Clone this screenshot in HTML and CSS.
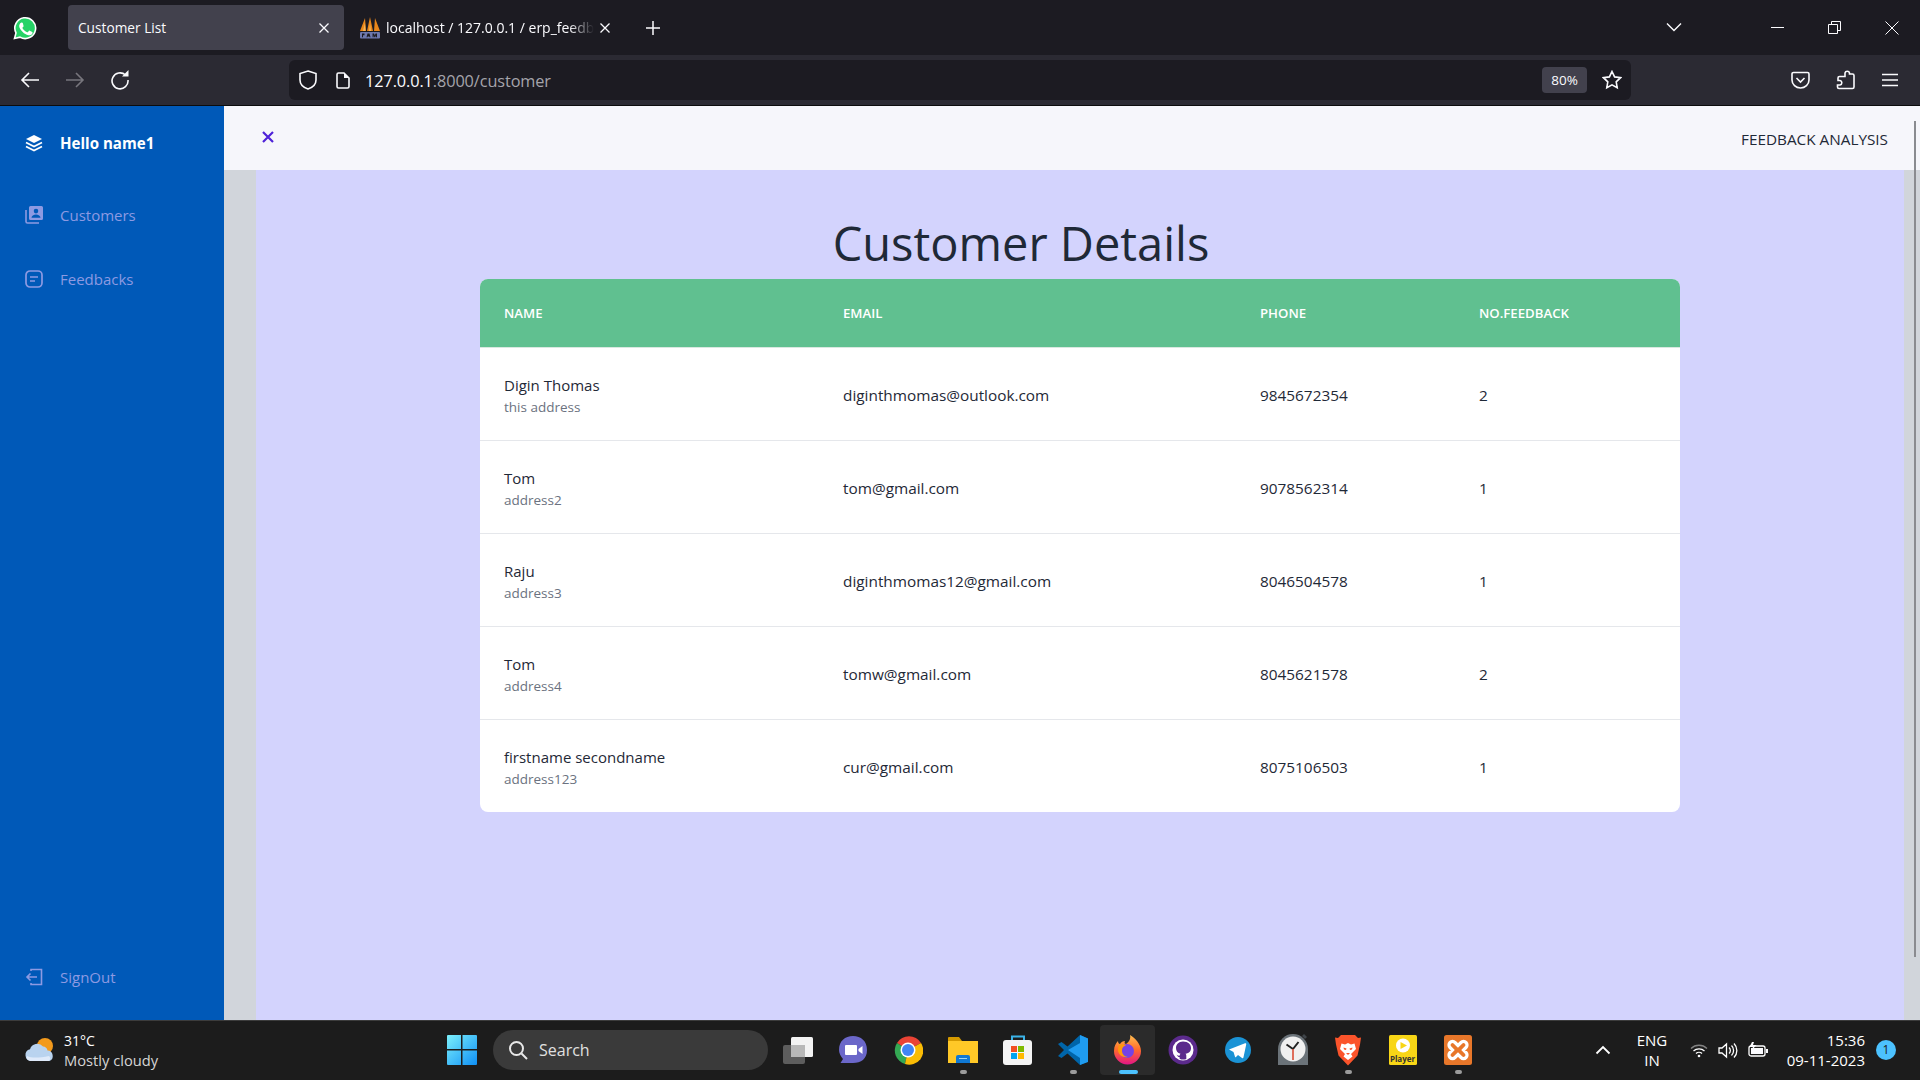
FILE: index.html
```html
<!DOCTYPE html>
<html lang="en">
<head>
<meta charset="utf-8">
<title>Customer List</title>
<link rel="stylesheet" href="styles.css">
</head>
<body>
<div class="tabbar">
  <svg class="wa" width="24" height="24" viewBox="0 0 24 24"><path fill="#25d366" stroke="#fff" stroke-width="1.6" d="M1.5 22.5l1.5-5.6A10.4 10.4 0 1 1 7 21.100z"/><path fill="#fff" d="M8.700 6.500c-.4 0-1 .2-1.400.7-.5.6-1.100 1.500-1.100 2.800 0 1.600 1.200 3.300 1.400 3.500.2.300 2.300 3.600 5.600 4.900 2.700 1 3.300.8 3.900.8.600-.1 1.900-.8 2.200-1.500.3-.8.300-1.400.2-1.500-.1-.2-.3-.2-.7-.4l-2.200-1.100c-.3-.1-.5-.2-.8.200l-1 1.300c-.2.200-.4.200-.7.100-.4-.2-1.400-.5-2.700-1.700-1-.9-1.700-2-1.900-2.300-.2-.4 0-.6.100-.7l.9-1.200c.1-.2.100-.4 0-.6L9.900 7.300c-.3-.7-.6-.8-1.200-.8z"/></svg>
  <div class="tab active"><span class="tab-title">Customer List</span><svg class="tab-x" viewBox="0 0 12 12"><path d="M1.500 1.500l9 9m0-9l-9 9"/></svg></div>
  <div class="tab second">
    <svg class="pma" width="22" height="22" viewBox="0 0 22 22"><path fill="#e8861a" d="M1 14L6 1l1 13zM8 14l3-14 3 14zM15 14l1-13 5 13z"/><path fill="#f5b759" d="M4 14l2-8 .5 8zM10 14l1-8 1 8z"/><rect x="1" y="15" width="20" height="6.500" rx="1" fill="#6c78af"/><path fill="#1c1b22" d="M3 16.500h2.500v1.700H4v2H3zM8.500 16.500h2l1 3.700h-1l-.2-.8H8.700l-.2.800h-1zM13.500 16.500h1.500l.8 2 .8-2H18v3.700h-1v-2l-.8 2h-.8l-.8-2v2h-1z"/></svg>
    <span class="tab-title fade">localhost / 127.0.0.1 / erp_feedb</span>
    <svg class="tab-x" viewBox="0 0 12 12"><path d="M1.500 1.500l9 9m0-9l-9 9"/></svg>
  </div>
  <svg class="plus" width="16" height="16" viewBox="0 0 16 16"><path d="M8 1v14M1 8h14"/></svg>
  <div class="grow"></div>
  <svg class="chev" width="16" height="10" viewBox="0 0 16 10"><path d="M1 1.500l7 7 7-7"/></svg>
  <div class="winbtns">
    <svg width="13" height="13" viewBox="0 0 13 13"><path d="M0 6.500h13"/></svg>
    <svg width="13" height="13" viewBox="0 0 13 13"><path d="M.5 3.500h9v9h-9zM3.500 3V.5h9v9H10"/></svg>
    <svg width="14" height="14" viewBox="0 0 14 14"><path d="M.5.5l13 13m0-13l-13 13"/></svg>
  </div>
</div>
<div class="toolbar">
  <svg class="nav back" width="20" height="18" viewBox="0 0 20 18"><path d="M19 9H2M9 2L2 9l7 7"/></svg>
  <svg class="nav fwd" width="20" height="18" viewBox="0 0 20 18"><path d="M1 9h17M11 2l7 7-7 7"/></svg>
  <svg class="nav reload" width="20" height="20" viewBox="0 0 20 20"><path d="M15.500 5A8 8 0 1 0 18 10"/><path class="solid" d="M12 6.500h6.500V0z"/></svg>
  <div class="urlbar">
    <svg class="nav" width="18" height="20" viewBox="0 0 18 20"><path d="M9 1l8 2.500V10c0 4.500-3.500 7.500-8 9-4.500-1.500-8-4.500-8-9V3.500z"/></svg>
    <svg class="nav page-ic" width="14" height="17" viewBox="0 0 14 17"><path d="M1 2.500A1.500 1.500 0 0 1 2.500 1H8l5 5v8.500a1.500 1.500 0 0 1-1.500 1.500h-9A1.500 1.500 0 0 1 1 14.500z"/><path class="solid" d="M8 1l5 5H8z"/></svg>
    <span class="url"><b>127.0.0.1</b>:8000/customer</span>
    <span class="zoomlvl">80%</span>
    <svg class="nav star" width="20" height="20" viewBox="0 0 20 20"><path d="M10 1.500l2.600 5.400 5.900.8-4.300 4.100 1 5.900-5.200-2.800-5.200 2.800 1-5.900L1.500 7.700l5.900-.8z"/></svg>
  </div>
  <svg class="nav pocket" width="19" height="18" viewBox="0 0 19 18"><path d="M2.500 1.500h14A1.500 1.500 0 0 1 18 3v6a8.500 8 0 0 1-17 0V3a1.500 1.500 0 0 1 1.500-1.500z"/><path d="M5.500 7l4 4 4-4"/></svg>
  <svg class="nav ext" width="19" height="20" viewBox="0 0 19 20"><path d="M9 4V3a2.300 2.300 0 0 1 4.500 0v1h3a1.500 1.500 0 0 1 1.500 1.500V17a1.500 1.500 0 0 1-1.500 1.500H3A1.500 1.500 0 0 1 1.500 17v-2H4a2.300 2.300 0 0 0 0-4.500H2V8a1.500 1.500 0 0 1 1.500-1.500H9z"/></svg>
  <svg class="nav menu" width="16" height="14" viewBox="0 0 16 14"><path d="M0 1.500h16M0 7h16M0 12.500h16"/></svg>
</div>
<div class="page">
  <aside class="sidebar">
    <div class="side-item brand">
      <svg class="side-ic" width="18" height="18" viewBox="0 0 18 18"><path d="M9 1l8 4-8 4-8-4z" fill="#fff"/><path d="M1 8.500l8 4 8-4M1 12.500l8 4 8-4" fill="none" stroke="#fff" stroke-width="1.800"/></svg>
      <span>Hello name1</span>
    </div>
    <div class="side-item link first">
      <svg class="side-ic" width="18" height="18" viewBox="0 0 18 18"><path fill="none" stroke="currentColor" stroke-width="1.600" d="M1 4v11.500A1.500 1.500 0 0 0 2.500 17H14"/><path fill="currentColor" fill-rule="evenodd" d="M5.500 0h11A1.500 1.500 0 0 1 18 1.500v11a1.500 1.500 0 0 1-1.500 1.500h-11A1.500 1.500 0 0 1 4 12.500v-11A1.500 1.500 0 0 1 5.500 0zM11 2.800a2.300 2.300 0 1 0 0 4.600 2.300 2.300 0 0 0 0-4.600zM6.500 11.800h9c0-2-2.200-3.300-4.500-3.300s-4.500 1.300-4.500 3.300z"/></svg>
      <span>Customers</span>
    </div>
    <div class="side-item link">
      <svg class="side-ic" width="18" height="18" viewBox="0 0 18 18"><rect x="1" y="1" width="16" height="16" rx="4" fill="none" stroke="currentColor" stroke-width="1.700"/><path stroke="currentColor" stroke-width="1.700" d="M5 7h8M5 11h5"/></svg>
      <span>Feedbacks</span>
    </div>
    <div class="grow"></div>
    <div class="side-item link signout">
      <svg class="side-ic" width="18" height="18" viewBox="0 0 18 18"><path fill="none" stroke="currentColor" stroke-width="1.600" d="M6 3V1.500h10.500v15H6V15M12 9H2M5.500 5.500L2 9l3.500 3.500"/></svg>
      <span>SignOut</span>
    </div>
  </aside>
  <main class="main">
    <header class="topbar">
      <svg class="close" width="12" height="12" viewBox="0 0 12 12"><path d="M1 1l10 10m0-10L1 11"/></svg>
      <span class="analysis">FEEDBACK ANALYSIS</span>
    </header>
    <div class="body-area">
      <div class="gutter"></div>
      <div class="content">
        <div class="wrap">
          <h1>Customer Details</h1>
          <table>
            <thead>
              <tr><th class="c1">NAME</th><th class="c2">EMAIL</th><th class="c3">PHONE</th><th class="c4">NO.FEEDBACK</th></tr>
            </thead>
            <tbody>
              <tr><td><div class="nm">Digin Thomas</div><div class="ad">this address</div></td><td>diginthmomas@outlook.com</td><td>9845672354</td><td>2</td></tr>
              <tr><td><div class="nm">Tom</div><div class="ad">address2</div></td><td>tom@gmail.com</td><td>9078562314</td><td>1</td></tr>
              <tr><td><div class="nm">Raju</div><div class="ad">address3</div></td><td>diginthmomas12@gmail.com</td><td>8046504578</td><td>1</td></tr>
              <tr><td><div class="nm">Tom</div><div class="ad">address4</div></td><td>tomw@gmail.com</td><td>8045621578</td><td>2</td></tr>
              <tr><td><div class="nm">firstname secondname</div><div class="ad">address123</div></td><td>cur@gmail.com</td><td>8075106503</td><td>1</td></tr>
            </tbody>
          </table>
        </div>
      </div>
      <div class="scroll"><div class="thumb"></div></div>
    </div>
  </main>
</div>
<footer class="taskbar">
  <div class="weather">
    <svg width="32" height="26" viewBox="0 0 32 26"><circle cx="21" cy="9" r="8" fill="#f39a1c"/><path fill="#b9d3ef" d="M7 24a6 6 0 0 1-1-11.800A7.500 7.500 0 0 1 19 9.500a5 5 0 0 1 4.500 4 5.500 5.500 0 0 1 2 10.500z"/><path fill="#dfeafa" d="M6 24c-3-1-4-3-3-5 4 2 12 2 22 0 2 2 1 4 0 5z"/></svg>
    <div class="w-text"><div class="w-t">31°C</div><div class="w-d">Mostly cloudy</div></div>
  </div>
  <svg class="winlogo" width="30" height="30" viewBox="0 0 30 30"><defs><linearGradient id="wg" x1="0" y1="0" x2="1" y2="1"><stop offset="0" stop-color="#7cf0fb"/><stop offset="1" stop-color="#0f8ff5"/></linearGradient></defs><path fill="url(#wg)" d="M0 1a1 1 0 0 1 1-1h13v14H0zM15.500 0H29a1 1 0 0 1 1 1v13H15.500zM0 15.500h14V30H1a1 1 0 0 1-1-1zM15.500 15.500H30V29a1 1 0 0 1-1 1H15.500z"/></svg>
  <div class="search">
    <svg width="20" height="20" viewBox="0 0 20 20"><circle cx="8.500" cy="8.500" r="6.500"/><path d="M13.500 13.500L19 19"/></svg>
    <span>Search</span>
  </div>
  <div class="apps">
    <div class="app"><svg width="32" height="28" viewBox="0 0 32 28"><rect x="1" y="9" width="22" height="19" rx="2" fill="#5d5d5d"/><rect x="9" y="1" width="22" height="20" rx="1.500" fill="#f3f3f3"/><rect x="9" y="9" width="14" height="12" fill="#b8b8b8"/></svg></div>
    <div class="app"><svg width="30" height="30" viewBox="0 0 30 30"><path fill="#6b67c9" d="M15 1C23 1 29 6 29 15s-6 13-14 13H2.500l2.500-4C2.500 21 1 18 1 15 1 6 7 1 15 1z"/><path fill="#fff" d="M8 10h10a1 1 0 0 1 1 1v8a1 1 0 0 1-1 1H8a1 1 0 0 1-1-1v-8a1 1 0 0 1 1-1zM20.500 14l4-3v8l-4-3z"/></svg></div>
    <div class="app"><svg width="30" height="30" viewBox="0 0 30 30"><path fill="#ea4335" d="M15 15L4 8a14 14 0 0 1 24 0z"/><path fill="#34a853" d="M15 15L4 8a14 14 0 0 0 8 21z"/><path fill="#fbbc05" d="M15 15l13-7a14 14 0 0 1-16 21z"/><circle cx="15" cy="15" r="7.500" fill="#fff"/><circle cx="15" cy="15" r="6" fill="#4285f4"/></svg></div>
    <div class="app dot"><svg width="30" height="28" viewBox="0 0 30 28"><path fill="#d59a00" d="M0 2a1 1 0 0 1 1-1h10l3 4H0z"/><rect y="5" width="30" height="22" fill="#ffc827"/><path fill="#0f78d4" d="M8 21a2 2 0 0 1 2-2h10a2 2 0 0 1 2 2v6H8z"/><path fill="#9ad4f5" d="M11 22h8v1h-8z"/></svg></div>
    <div class="app"><svg width="30" height="32" viewBox="0 0 30 32"><path fill="none" stroke="#3bb3e8" stroke-width="2" d="M9 7V2.500h12V7"/><rect y="6" width="29" height="25" rx="3" fill="#f4f4f4"/><rect x="8" y="12" width="6" height="6" fill="#f25022"/><rect x="15" y="12" width="6" height="6" fill="#7fba00"/><rect x="8" y="19" width="6" height="6" fill="#00a4ef"/><rect x="15" y="19" width="6" height="6" fill="#ffb900"/></svg></div>
    <div class="app dot"><svg width="30" height="30" viewBox="0 0 30 30"><path fill="#0065a9" d="M22 0l8 3.500v23L22 30 9.500 18.500 3.500 23 0 21l6-6-6-6 3.500-2 6 4.500z"/><path fill="#1f9cf0" d="M22 0l8 3.500V27L22 30V8l-12 7 12 8z"/></svg></div>
    <div class="app active"><svg width="30" height="30" viewBox="0 0 30 30"><defs><linearGradient id="ff" x1="0" y1="0" x2="0" y2="1"><stop offset="0" stop-color="#ffbd4f"/><stop offset=".5" stop-color="#ff6b2b"/><stop offset="1" stop-color="#e31587"/></linearGradient></defs><path fill="url(#ff)" d="M17 0c5 3 11 9 11 16a13.500 13.500 0 0 1-27 0C1 11 3 8 5 6c0 2 1 3 2 3 1-2 3-3 5-3-1 2 0 3 1 3 3-2 5-5 4-9z"/><circle cx="14" cy="16" r="7" fill="#7542e5"/><path fill="#ff980e" d="M6 10c2-1 5-1 7 1-3 0-4 2-4 5s3 6 6 6c-5 1-9-2-10-6 0-2 0-4 1-6z"/></svg></div>
    <div class="app"><svg width="30" height="30" viewBox="0 0 30 30"><circle cx="15" cy="15" r="14.500" fill="#5b2a8c"/><circle cx="15" cy="15" r="10.500" fill="#fff"/><path fill="#5b2a8c" d="M15 6.500c-4.500 0-7 3-7 6.500 0 3 1.500 5 4.500 5.800-.5.500-.7 1-.8 1.800-1 .4-2.200.2-3-1 .3 1.500 1.300 2.600 3 2.600V24c0 .3 1 .500 3.300.500s3.300-.2 3.300-.5v-3.500c0-.8-.3-1.300-.8-1.700C21.500 18 23 16 23 13c0-3.500-2.500-6.500-8-6.500z"/></svg></div>
    <div class="app"><svg width="28" height="28" viewBox="0 0 28 28"><circle cx="14" cy="14" r="13" fill="#1b93d5"/><path fill="#fff" d="M5 13.500l16-6.200c.8-.3 1.400.2 1.200 1.200l-2.700 12.800c-.2.900-.8 1.100-1.500.700L14 19l-2 2c-.5.500-.8.400-1-.2L9.500 16z"/></svg></div>
    <div class="app"><svg width="30" height="32" viewBox="0 0 30 32"><path fill="#3f4449" d="M24 2l2-2 3 3-2 2z"/><path fill="#6b7379" d="M0 31V15a15 15 0 0 1 30 0v16z"/><circle cx="15" cy="15" r="12.500" fill="#f0f0f0"/><path stroke="#222" stroke-width="2" d="M15 15L8.500 10.500M15 15l5.500-7" fill="none"/><path stroke="#d8432b" stroke-width="1.500" d="M15 15v11"/></svg></div>
    <div class="app dot"><svg width="26" height="32" viewBox="0 0 26 32"><path fill="#fb542b" d="M6 1h14l3 3 3-.5-1 7-2.500 11L13 31.500 3.500 21.500 1 10.500l-1-7 3 .5z"/><path fill="#fff" d="M13 26l-4.500-3.500L10 20l-5-5 1.500-5.500L10 10.500 13 9l3 1.500 3.500-1L21 15l-5 5 1.500 2.500z"/><path fill="#fb542b" d="M8.500 13.500l3 1-.5 1.500-2-.5zM17.500 13.500l-3 1 .5 1.500 2-.5zM11 19h4l-2 2z"/></svg></div>
    <div class="app"><svg width="28" height="30" viewBox="0 0 28 30"><rect width="28" height="30" rx="1.500" fill="#f8d616"/><circle cx="14" cy="10.500" r="7" fill="#fff"/><path fill="#f8d616" d="M11.500 7l6.500 3.500L11.500 14z"/></svg><span class="pl">Player</span></div>
    <div class="app dot"><svg width="28" height="30" viewBox="0 0 28 30"><rect width="28" height="30" rx="2.500" fill="#e8772a"/><path fill="none" stroke="#fff" stroke-width="3.200" d="M14 10.500L11 7.500a3.500 3.500 0 1 0-5 5l2.500 2.500L6 17.500a3.500 3.500 0 1 0 5 5l3-3 3 3a3.500 3.500 0 1 0 5-5L19.500 15l2.500-2.500a3.500 3.500 0 1 0-5-5z"/></svg></div>
  </div>
  <div class="grow"></div>
  <div class="tray">
    <svg class="t-chev" width="16" height="10" viewBox="0 0 16 10"><path d="M1.500 8.500L8 2l6.500 6.500"/></svg>
    <div class="lang"><div>ENG</div><div>IN</div></div>
    <svg class="t-ic" width="18" height="15" viewBox="0 0 18 15"><path d="M1 5.500a11.500 11.500 0 0 1 16 0" opacity=".45"/><path d="M3.500 8a8 8 0 0 1 11 0M6 10.500a4.300 4.300 0 0 1 6 0"/><circle class="solid" cx="9" cy="13" r="1.300"/></svg>
    <svg class="t-ic" width="20" height="17" viewBox="0 0 20 17"><path d="M1 6h3l4.500-4v13L4 11H1zM11 5.500a4 4 0 0 1 0 6M13.500 3.500a7 7 0 0 1 0 10M16 1.500a10 10 0 0 1 0 14"/></svg>
    <svg class="t-ic" width="20" height="16" viewBox="0 0 20 16"><rect x="1" y="4" width="16" height="10" rx="2"/><rect class="solid" x="3" y="6" width="12" height="6"/><path class="solid" d="M18 7h2v4h-2zM4 0L1.500 5H5L3 9l5.500-6H5l1-3z"/></svg>
    <div class="clock"><div>15:36</div><div>09-11-2023</div></div>
    <div class="badge">1</div>
  </div>
</footer>
</body>
</html>
```
FILE: styles.css
```css
* { box-sizing: border-box; }
html, body { margin: 0; height: 100%; }
body {
  display: flex; flex-direction: column; height: 100vh; overflow: hidden;
  font-family: "Open Sans", "Noto Sans", sans-serif; color: #1f2937;
}
.grow { flex: 1; }
svg { flex: none; display: block; }

.tabbar { height: 55px; background: #1c1b22; display: flex; align-items: center; color: #fbfbfe; padding-right: 21px; flex: none; }
.wa { margin: 0 31px 0 13px; }
.tab { height: 45px; display: flex; align-items: center; font-size: 14px; }
.tab.active { width: 276px; background: #42414d; border-radius: 4px; padding: 0 14px 0 10px; justify-content: space-between; font-size: 13.700px; }
.tab.second { width: 272px; padding-left: 15px; }
.tab-x { width: 12px; height: 12px; fill: none; stroke: #fbfbfe; stroke-width: 1.300; }
.pma { margin: 0 5px 0 0; }
.fade { width: 208px; overflow: hidden; white-space: nowrap; margin-right: 5px; -webkit-mask-image: linear-gradient(90deg,#000 88%,transparent); mask-image: linear-gradient(90deg,#000 88%,transparent); }
.plus { margin-left: 29px; fill: none; stroke: #fbfbfe; stroke-width: 1.500; }
.chev { fill: none; stroke: #fbfbfe; stroke-width: 1.400; margin-right: 89px; margin-bottom: 2px; }
.winbtns { display: flex; align-items: center; gap: 44px; }
.winbtns svg { fill: none; stroke: #fbfbfe; stroke-width: 1; }

.toolbar { height: 51px; background: #2b2a33; border-bottom: 1px solid #0c0c0d; display: flex; align-items: center; padding: 0 21px 0 20px; flex: none; }
.nav { fill: none; stroke: #fbfbfe; stroke-width: 1.600; }
.nav .solid, .solid { fill: #fbfbfe; stroke: none; }
.fwd { margin-left: 25px; stroke: #77767d; }
.reload { margin-left: 25px; }
.urlbar { width: 1342px; height: 40px; margin: 0 0 0 159px; background: #1c1b22; border-radius: 6px; display: flex; align-items: center; padding: 0 9px 0 10px; flex: none; }
.page-ic { margin-left: 19px; }
.url { margin: 2px 0 0 15px; font-size: 16.300px; color: #a5a4ab; flex: 1; letter-spacing: -.1px; }
.url b { font-weight: 400; color: #fbfbfe; }
.zoomlvl { width: 45px; height: 26px; background: #42414d; border-radius: 4px; color: #fbfbfe; font-size: 13.500px; display: flex; align-items: center; justify-content: center; margin-right: 15px; }
.pocket { margin-left: 160px; }
.ext { margin-left: 26px; }
.menu { margin-left: 27px; }

.page { flex: 1; display: flex; min-height: 0; }
.sidebar { width: 224px; background: #0059b8; display: flex; flex-direction: column; padding: 27px 0 33px 25px; flex: none; }
.side-item { display: flex; align-items: center; gap: 17px; height: 20px; }
.side-ic { width: 18px; height: 18px; }
.brand { color: #fff; font-weight: 700; font-size: 15.100px; }
.link { color: #8d9ae2; font-size: 15px; }
.first { margin-top: 52px; margin-bottom: 44px; }

.main { flex: 1; display: flex; flex-direction: column; min-width: 0; }
.topbar { height: 64px; background: #f6f6fb; display: flex; justify-content: space-between; padding: 23px 32px 0 38px; flex: none; }
.close { fill: none; stroke: #4f22d8; stroke-width: 2.200; margin-top: 2px; }
.analysis { font-size: 15.300px; line-height: 20px; color: #1f2937; }
.body-area { flex: 1; display: flex; min-height: 0; background: #d3d3fd; }
.gutter { width: 32px; background: #d1d5db; }
.content { flex: 1; padding-top: 38px; display: flex; justify-content: center; }
.wrap { width: 1200px; }
h1 { margin: 0; font-weight: 400; font-size: 47px; line-height: 71px; color: #1f2937; text-align: center; padding-right: 118px; }
table { width: 1200px; border-collapse: separate; border-spacing: 0; table-layout: fixed; background: #fff; border-radius: 8px; }
th { height: 69px; background: #60c090; color: #fff; font-size: 13.200px; font-weight: 600; text-align: left; padding: 0 0 0 24px; border-bottom: 1px solid #d9e8e0; }
th:first-child { border-top-left-radius: 8px; }
th:last-child { border-top-right-radius: 8px; }
.c1 { width: 339px; } .c2 { width: 417px; } .c3 { width: 219px; } .c4 { width: 225px; }
td { height: 93px; padding: 2px 0 0 24px; font-size: 15.350px; color: #1f2937; border-bottom: 1px solid #e5e7eb; }
tr:last-child td { border-bottom: 0; height: 92px; }
.nm { font-size: 15px; line-height: 22px; }
.ad { font-size: 13.500px; line-height: 20px; color: #6b7280; margin-top: 1px; }
.scroll { width: 16px; background: #d1d5db; position: relative; flex: none; }
.thumb { position: absolute; left: 10px; top: -49px; width: 2px; height: 836px; background: #8a8b90; }

.taskbar { height: 60px; flex: none; background: #1c1c1c; border-top: 1px solid #3c3c3c; padding-bottom: 1px; display: flex; align-items: center; color: #fff; }
.weather { width: 447px; display: flex; align-items: center; padding-left: 24px; gap: 8px; flex: none; }
.w-text { line-height: 20px; font-size: 14px; }
.w-d { color: #d5d5d5; font-size: 14.700px; margin-top: -1px; }
.search { width: 275px; height: 40px; margin-left: 16px; border-radius: 20px; background: #3a3a3a; display: flex; align-items: center; padding-left: 15px; gap: 11px; font-size: 16px; color: #e0e0e0; flex: none; }
.search svg { fill: none; stroke: #e8e8e8; stroke-width: 2; }
.apps { display: flex; margin-left: 2px; }
.app { width: 55px; height: 50px; display: flex; align-items: center; justify-content: center; position: relative; }
.app.dot::after, .app.active::after { content: ""; position: absolute; left: 50%; bottom: 1px; width: 7px; height: 4px; margin-left: -3px; border-radius: 2px; background: #9b9b9b; }
.app.active { background: #2b2b2b; border-radius: 4px; }
.app.active::after { width: 19px; margin-left: -9px; background: #4cc2ff; }
.pl { position: absolute; left: 13px; right: 13px; bottom: 12px; font-size: 8px; line-height: 9px; font-weight: 700; color: #333; text-align: center; }
.tray { display: flex; align-items: center; padding-right: 24px; }
.tray svg { fill: none; stroke: #fff; stroke-width: 1.300; }
.t-chev { stroke-width: 1.800 !important; }
.lang { margin: 0 3px 0 16px; width: 50px; text-align: center; font-size: 15px; line-height: 20px; }
.t-ic { margin-left: 10px; }
.clock { width: 91px; margin-left: 6px; text-align: right; font-size: 15px; line-height: 20px; }
.badge { width: 20px; height: 20px; margin-left: 11px; border-radius: 50%; background: #4cc2ff; color: #1c1c1c; font-size: 12px; text-align: center; line-height: 20px; }
```
